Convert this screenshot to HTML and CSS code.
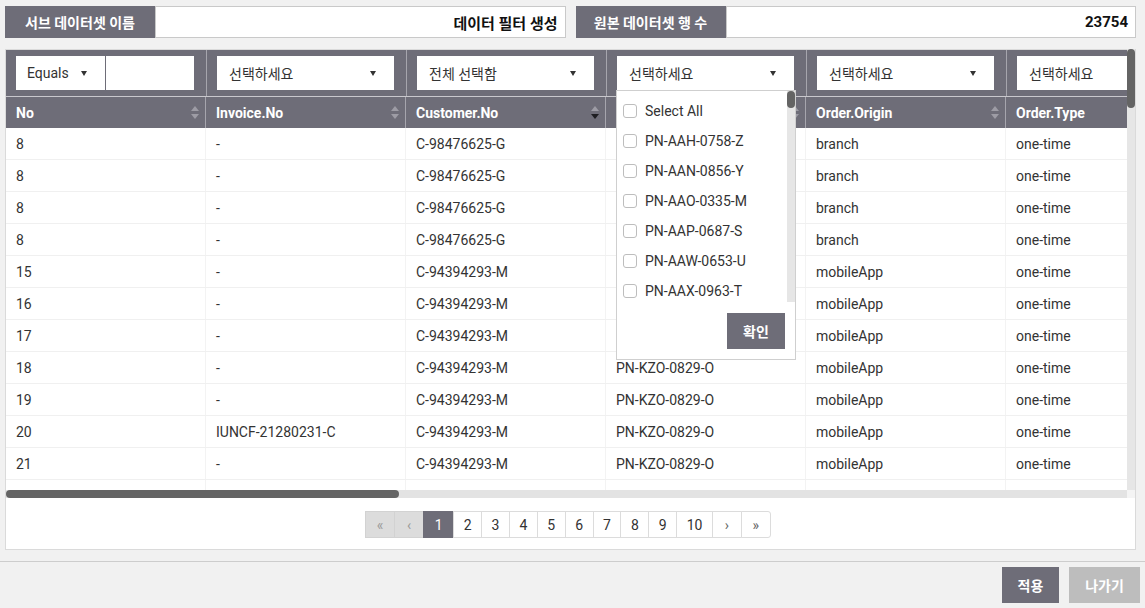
FILE: index.html
```html
<!DOCTYPE html>
<html lang="ko">
<head>
<meta charset="utf-8">
<title>데이터 필터 생성</title>
<link rel="stylesheet" href="styles.css">
</head>
<body>
<div class="info-row">
  <div class="info">
    <div class="info-label">서브 데이터셋 이름</div>
    <div class="info-value">데이터 필터 생성</div>
  </div>
  <div class="info">
    <div class="info-label">원본 데이터셋 행 수</div>
    <div class="info-value">23754</div>
  </div>
</div>

<div class="panel">
  <div class="grid-area">
    <div class="viewport">
      <div class="filter-row">
        <div class="fcell">
          <div class="combo">
            <div class="sel sel-op">Equals <span class="caret"></span></div>
            <div class="txt"></div>
          </div>
        </div>
        <div class="fcell"><div class="sel">선택하세요 <span class="caret"></span></div></div>
        <div class="fcell"><div class="sel">전체 선택함 <span class="caret"></span></div></div>
        <div class="fcell"><div class="sel">선택하세요 <span class="caret"></span></div></div>
        <div class="fcell"><div class="sel">선택하세요 <span class="caret"></span></div></div>
        <div class="fcell"><div class="sel">선택하세요 <span class="caret"></span></div></div>
      </div>
      <div class="head-row">
        <div class="hcell">No<svg class="sort" width="8" height="13" viewBox="0 0 8 13"><path d="M4 0L8 5H0Z" fill="#9d9ca5"/><path d="M4 13L0 8H8Z" fill="#9d9ca5"/></svg></div>
        <div class="hcell">Invoice.No<svg class="sort" width="8" height="13" viewBox="0 0 8 13"><path d="M4 0L8 5H0Z" fill="#9d9ca5"/><path d="M4 13L0 8H8Z" fill="#9d9ca5"/></svg></div>
        <div class="hcell">Customer.No<svg class="sort" width="8" height="13" viewBox="0 0 8 13"><path d="M4 0L8 5H0Z" fill="#9d9ca5"/><path d="M4 13L0 8H8Z" fill="#1e1e22"/></svg></div>
        <div class="hcell"><span></span><svg class="sort" width="8" height="13" viewBox="0 0 8 13"><path d="M4 0L8 5H0Z" fill="#9d9ca5"/><path d="M4 13L0 8H8Z" fill="#9d9ca5"/></svg></div>
        <div class="hcell">Order.Origin<svg class="sort" width="8" height="13" viewBox="0 0 8 13"><path d="M4 0L8 5H0Z" fill="#9d9ca5"/><path d="M4 13L0 8H8Z" fill="#9d9ca5"/></svg></div>
        <div class="hcell">Order.Type<svg class="sort" width="8" height="13" viewBox="0 0 8 13"><path d="M4 0L8 5H0Z" fill="#9d9ca5"/><path d="M4 13L0 8H8Z" fill="#9d9ca5"/></svg></div>
      </div>
      <div class="row"><div class="cell">8</div><div class="cell">-</div><div class="cell">C-98476625-G</div><div class="cell"></div><div class="cell">branch</div><div class="cell">one-time</div></div>
      <div class="row"><div class="cell">8</div><div class="cell">-</div><div class="cell">C-98476625-G</div><div class="cell"></div><div class="cell">branch</div><div class="cell">one-time</div></div>
      <div class="row"><div class="cell">8</div><div class="cell">-</div><div class="cell">C-98476625-G</div><div class="cell"></div><div class="cell">branch</div><div class="cell">one-time</div></div>
      <div class="row"><div class="cell">8</div><div class="cell">-</div><div class="cell">C-98476625-G</div><div class="cell"></div><div class="cell">branch</div><div class="cell">one-time</div></div>
      <div class="row"><div class="cell">15</div><div class="cell">-</div><div class="cell">C-94394293-M</div><div class="cell"></div><div class="cell">mobileApp</div><div class="cell">one-time</div></div>
      <div class="row"><div class="cell">16</div><div class="cell">-</div><div class="cell">C-94394293-M</div><div class="cell"></div><div class="cell">mobileApp</div><div class="cell">one-time</div></div>
      <div class="row"><div class="cell">17</div><div class="cell">-</div><div class="cell">C-94394293-M</div><div class="cell"></div><div class="cell">mobileApp</div><div class="cell">one-time</div></div>
      <div class="row"><div class="cell">18</div><div class="cell">-</div><div class="cell">C-94394293-M</div><div class="cell">PN-KZO-0829-O</div><div class="cell">mobileApp</div><div class="cell">one-time</div></div>
      <div class="row"><div class="cell">19</div><div class="cell">-</div><div class="cell">C-94394293-M</div><div class="cell">PN-KZO-0829-O</div><div class="cell">mobileApp</div><div class="cell">one-time</div></div>
      <div class="row"><div class="cell">20</div><div class="cell">IUNCF-21280231-C</div><div class="cell">C-94394293-M</div><div class="cell">PN-KZO-0829-O</div><div class="cell">mobileApp</div><div class="cell">one-time</div></div>
      <div class="row"><div class="cell">21</div><div class="cell">-</div><div class="cell">C-94394293-M</div><div class="cell">PN-KZO-0829-O</div><div class="cell">mobileApp</div><div class="cell">one-time</div></div>
      <div class="row"><div class="cell">22</div><div class="cell">-</div><div class="cell">C-94394293-M</div><div class="cell">PN-KZO-0829-O</div><div class="cell">branch</div><div class="cell">subscription</div></div>
    </div>
    <div class="vscroll"><div class="vthumb"></div></div>
  </div>
  <div class="hscroll"><div class="htrack"><div class="hthumb"></div></div><div class="corner"></div></div>

  <div class="pager">
    <span class="pg dis">«</span>
    <span class="pg dis">‹</span>
    <span class="pg on">1</span>
    <span class="pg">2</span>
    <span class="pg">3</span>
    <span class="pg">4</span>
    <span class="pg">5</span>
    <span class="pg">6</span>
    <span class="pg">7</span>
    <span class="pg">8</span>
    <span class="pg">9</span>
    <span class="pg">10</span>
    <span class="pg arrow">›</span>
    <span class="pg arrow">»</span>
  </div>

  <div class="dropdown">
    <div class="dd-body">
      <div class="dd-list">
        <label class="dd-item"><span class="box"></span>Select All</label>
        <label class="dd-item"><span class="box"></span>PN-AAH-0758-Z</label>
        <label class="dd-item"><span class="box"></span>PN-AAN-0856-Y</label>
        <label class="dd-item"><span class="box"></span>PN-AAO-0335-M</label>
        <label class="dd-item"><span class="box"></span>PN-AAP-0687-S</label>
        <label class="dd-item"><span class="box"></span>PN-AAW-0653-U</label>
        <label class="dd-item"><span class="box"></span>PN-AAX-0963-T</label>
      </div>
      <div class="dd-scroll"><div class="dd-thumb"></div></div>
    </div>
    <div class="dd-foot"><button class="btn-ok">확인</button></div>
  </div>
</div>

<div class="footer">
  <button class="btn btn-apply">적용</button>
  <button class="btn btn-exit">나가기</button>
</div>
</body>
</html>
```

FILE: styles.css
```css
* { box-sizing: border-box; margin: 0; padding: 0; }
html, body { background: #f1f1f1; }
body {
  font-family: Roboto, "Noto Sans CJK KR", sans-serif;
  font-size: 14px;
  color: #333;
  width: 1145px;
  height: 608px;
  overflow: hidden;
}

/* top info row */
.info-row { display: flex; gap: 10px; margin: 6px 9px 0 5px; height: 32px; }
.info { flex: 1; display: flex; }
.info-label {
  width: 150px; background: #6e6d78; color: #fff; font-weight: 700;
  display: flex; align-items: center; justify-content: center; font-size: 14px;
}
.info-value {
  flex: 1; background: #fff; border: 1px solid #c9c9c9;
  display: flex; align-items: center; justify-content: flex-end;
  padding-right: 7px; font-weight: 700; font-size: 15px; color: #111;
}

/* panel */
.panel {
  position: relative; margin: 11px 9px 0 5px; background: #fff;
  border: 1px solid #dadada; height: 501px; display: flex; flex-direction: column;
}
.grid-area { display: flex; height: 440px; }
.viewport { flex: 1; overflow: hidden; }
.vscroll { width: 8px; background: #e6e6e6; margin-top: -1px; }
.vthumb { height: 59px; background: #646464; border-radius: 4px; }

.filter-row {
  display: flex; height: 47px; background: #6e6d78;
  border-bottom: 1px solid #c9c8cd; width: 1200px;
}
.fcell {
  flex: 0 0 200px; padding: 6px 12px 6px 10px;
  border-right: 1px solid #a6a5ad;
}
.combo { display: flex; gap: 1px; height: 34px; }
.sel {
  height: 34px; background: #fff; display: flex; align-items: center;
  justify-content: space-between; padding: 0 18px 0 12px; color: #333; font-size: 14px;
}
.sel-op { width: 89px; padding: 0 18px 0 11px; }
.txt { width: 88px; height: 34px; background: #fff; }
.caret {
  width: 0; height: 0; border-left: 3.5px solid transparent;
  border-right: 3.5px solid transparent; border-top: 5px solid #333;
}

.head-row { display: flex; height: 31px; background: #6e6d78; width: 1200px; }
.hcell {
  flex: 0 0 200px; padding: 0 6px 0 10px; display: flex; align-items: center;
  justify-content: space-between; color: #fff; font-weight: 700; font-size: 14px;
  border-right: 1px solid #a6a5ad;
}

.row { display: flex; height: 32px; border-bottom: 1px solid #f0f0f0; width: 1200px; }
.cell {
  flex: 0 0 200px; padding-left: 10px; display: flex; align-items: center;
  border-right: 1px solid #f3f3f3; white-space: nowrap; color: #333;
}

.hscroll { display: flex; height: 8px; }
.htrack { flex: 1; background: #e3e3e3; }
.hthumb { width: 393px; height: 8px; background: #646464; border-radius: 4px; }
.corner { width: 8px; background: #f4f4f4; }

/* pagination */
.pager { display: flex; justify-content: center; margin-top: 13px; height: 27px; padding-right: 4px; }
.pg {
  display: flex; align-items: center; justify-content: center;
  padding: 0 9.5px; height: 27px; border: 1px solid #dcdcdc;
  margin-left: -1px; background: #fff; color: #333; font-size: 14px;
}
.pg.dis { background: #dcdcdc; color: #9a9a9a; border-color: #d2d2d2; width: 30px; padding: 0; }
.pg.on { background: #6e6d78; color: #fff; border-color: #6e6d78; width: 31px; padding: 0; }
.pg.arrow { color: #666; width: 30px; padding: 0; }
.pg:last-child { border-radius: 0 3px 3px 0; }

/* dropdown overlay */
.dropdown {
  position: absolute; left: 610px; top: 40px; width: 180px; height: 270px;
  background: #fff; border: 1px solid #cfcfcf; display: flex; flex-direction: column;
}
.dd-body { display: flex; height: 211px; overflow: hidden; }
.dd-list { flex: 1; padding-top: 5px; }
.dd-item {
  display: flex; align-items: center; height: 30px; padding-left: 6px; gap: 8px;
  color: #333; font-size: 14px; white-space: nowrap;
}
.box { width: 14px; height: 14px; border: 1px solid #bdbdbd; border-radius: 3px; background: #fff; flex: none; }
.dd-scroll { width: 8px; background: #e6e6e6; }
.dd-thumb { height: 17px; background: #646464; border-radius: 4px; }
.dd-foot { flex: 1; display: flex; justify-content: flex-end; align-items: flex-start; padding: 11px 10px 0 0; }
.btn-ok {
  width: 58px; height: 36px; border: none; background: #6e6d78; color: #fff;
  font-family: Roboto, "Noto Sans CJK KR", sans-serif; font-weight: 700; font-size: 14px;
}

/* footer */
.footer {
  margin-top: 11px; border-top: 1px solid #cdcdcd; display: flex;
  justify-content: flex-end; gap: 10px; padding: 5px 5px 0 0;
}
.btn {
  height: 36px; border: none; color: #fff;
  font-family: Roboto, "Noto Sans CJK KR", sans-serif; font-weight: 700; font-size: 14px;
}
.btn-apply { background: #6e6d78; width: 57px; }
.btn-exit { background: #bdbdbd; width: 71px; }
```
